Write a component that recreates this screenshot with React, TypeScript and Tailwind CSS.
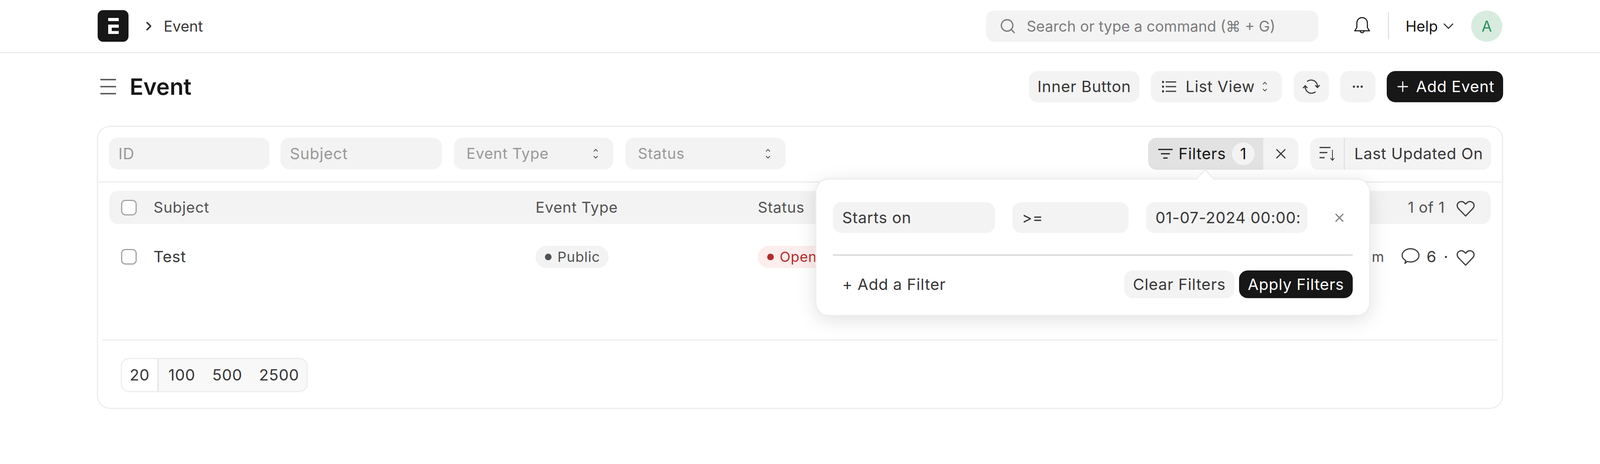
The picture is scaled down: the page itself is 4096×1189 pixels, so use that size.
import { Search, ChevronDown, ChevronRight, Ellipsis, Plus, X } from 'lucide-react';

function Logo() {
  return (
    <svg width="79" height="81" viewBox="0 0 79 81" className="shrink-0 ml-[2px]">
      <rect width="79" height="81" rx="14" fill="#171717" />
      <path d="M27 20h27v8H27z M27 37h27v8H36v8.500h18V61H27z" fill="#fff" />
    </svg>
  );
}

function Bell() {
  return (
    <svg width="54" height="54" viewBox="0 0 16 16" fill="none" stroke="#171717" strokeWidth="0.8" className="shrink-0 ml-[85px]">
      <path d="M8 1.500c-2.500 0-4 2-4 4.500v3l-1.500 2.500h11L12 9V6c0-2.500-1.500-4.500-4-4.500z" />
      <path d="M6.500 11.500a1.500 1.500 0 0 0 3 0" />
    </svg>
  );
}

function Heart({ className }: { className?: string }) {
  return (
    <svg width="52" height="52" viewBox="0 0 16 16" fill="none" stroke="#383838" strokeWidth="0.9" strokeLinejoin="round" className={`shrink-0 ${className ?? ''}`}>
      <path d="M8 14L2.400 8.200C1 6.800 1 4.600 2.400 3.400 3.800 2.200 6 2.400 7.200 3.800l.8.8.8-.8C10 2.400 12.200 2.200 13.600 3.400c1.400 1.200 1.400 3.400 0 4.800z" />
    </svg>
  );
}

function Comment({ className }: { className?: string }) {
  return (
    <svg width="52" height="52" viewBox="0 0 16 16" fill="none" stroke="#383838" strokeWidth="0.9" strokeLinejoin="round" className={`shrink-0 ${className ?? ''}`}>
      <path d="M4.200 11.600C2.600 10.600 1.400 9.200 1.400 7.500c0-2.900 2.900-5.200 6.600-5.200s6.600 2.300 6.600 5.200-2.900 5.200-6.600 5.200c-.9 0-1.800-.1-2.600-.4l-1.800 1.500z" />
    </svg>
  );
}

function Updown({ className }: { className?: string }) {
  return (
    <svg width="14" height="26" viewBox="0 0 14 26" fill="none" stroke="#525252" strokeWidth="2.200" className={`shrink-0 ${className ?? ''}`}>
      <path d="M2 7l5-5 5 5M2 19l5 5 5-5" />
    </svg>
  );
}

function ListIcon() {
  return (
    <svg width="36" height="30" viewBox="0 0 36 30" fill="none" stroke="#383838" strokeWidth="3" className="shrink-0">
      <path d="M9 3h27M9 15h27M9 27h27" />
      <circle cx="2" cy="3" r="1.500" /><circle cx="2" cy="15" r="1.500" /><circle cx="2" cy="27" r="1.500" />
    </svg>
  );
}

function Refresh() {
  return (
    <svg width="50" height="50" viewBox="0 0 16 16" fill="none" stroke="#383838" strokeWidth="0.9">
      <path d="M4.500 3.800A5.200 5.200 0 0 1 13 8.500M14.800 6.800L13 8.700 11.200 6.900" />
      <path d="M11.500 12.200A5.200 5.200 0 0 1 3 7.500M1.200 9.200L3 7.300 4.800 9.100" />
    </svg>
  );
}

function FilterIcon() {
  return (
    <svg width="37" height="26" viewBox="0 0 37 26" fill="none" stroke="#171717" strokeWidth="3" className="shrink-0">
      <path d="M0 2h37M7 13h23M13 24h11" />
    </svg>
  );
}

function SortIcon() {
  return (
    <svg width="38" height="37" viewBox="0 0 38 37" fill="none" stroke="#383838" strokeWidth="3">
      <path d="M0 3h28M0 16h20M0 29h13" />
      <path d="M33 9v27M28 30l5 6 5-6" strokeWidth="2" />
    </svg>
  );
}

function Toggle() {
  return (
    <svg width="42" height="42" viewBox="0 0 42 42" className="shrink-0 ml-[9px]" stroke="#525252" strokeWidth="3.500">
      <path d="M0 3h40M0 21h40M0 39h40" />
    </svg>
  );
}

function Checkbox() {
  return <div className="w-[40px] h-[40px] rounded-[11px] border-[3px] border-[#a3a3a3] bg-white shrink-0" />;
}

function Field({ label, width }: { label: string; width: string }) {
  return (
    <div className={`${width} h-[81px] rounded-[22px] bg-[#f3f3f3] px-[24px] flex items-center text-[#999999] shrink-0`}>
      {label}
    </div>
  );
}

function SelectField({ label, width }: { label: string; width: string }) {
  return (
    <div className={`${width} h-[81px] rounded-[22px] bg-[#f3f3f3] pl-[32px] pr-[38px] flex items-center justify-between text-[38.500px] text-[#999999] shrink-0`}>
      {label}
      <Updown />
    </div>
  );
}

function Btn({ children, className }: { children: React.ReactNode; className?: string }) {
  return (
    <div className={`h-[80px] rounded-[22px] bg-[#f3f3f3] flex items-center text-[#383838] shrink-0 ${className ?? ''}`}>
      {children}
    </div>
  );
}

export default function App() {
  return (
    <div className="w-[4096px] h-[1189px] bg-white overflow-hidden font-['Inter',sans-serif] text-[40px] tracking-[0.02em] leading-none whitespace-nowrap">
      {/* navbar */}
      <header className="h-[136px] border-b-[3px] border-[#ededed]">
        <div className="w-[3600px] h-full mx-auto flex items-center text-[38px] tracking-normal">
          <Logo />
          <ChevronRight size={36} strokeWidth={2.6} className="text-[#383838] ml-[34px]" />
          <span className="ml-[20px] text-[#383838]">Event</span>
          <div className="ml-auto w-[851px] h-[80px] rounded-[22px] bg-[#f3f3f3] flex items-center pl-[34px] text-[#7c7c7c]">
            <Search size={44} strokeWidth={1.8} className="text-[#7c7c7c]" />
            <span className="ml-[26px]">Search or type a command (⌘ + G)</span>
          </div>
          <Bell />
          <div className="w-[3px] h-[69px] bg-[#e2e2e2] ml-[39px]" />
          <span className="ml-[42px] text-[#171717]">Help</span>
          <ChevronDown size={44} strokeWidth={1.6} className="ml-[5px] text-[#383838]" />
          <div className="ml-[36px] w-[80px] h-[80px] rounded-full bg-[#d7ecdf] text-[#278f5e] flex items-center justify-center mr-[2px]">A</div>
        </div>
      </header>

      <main className="w-[3600px] mx-auto">
        {/* page head */}
        <div className="h-[80px] mt-[46px] flex items-center">
          <Toggle />
          <h1 className="ml-[33px] text-[58px] font-semibold text-[#171717] tracking-normal">Event</h1>
          <div className="ml-auto flex items-center">
            <Btn className="w-[283px] justify-center">Inner Button</Btn>
            <Btn className="w-[336px] ml-[29px] pl-[29px] pr-[37px]">
              <ListIcon />
              <span className="ml-[24px]">List View</span>
              <Updown className="ml-auto" />
            </Btn>
            <Btn className="w-[90px] ml-[30px] justify-center"><Refresh /></Btn>
            <Btn className="w-[90px] ml-[29px] justify-center"><Ellipsis size={34} strokeWidth={2} /></Btn>
            <div className="w-[298px] h-[80px] ml-[29px] rounded-[22px] bg-[#171717] text-white flex items-center pl-[20px]">
              <Plus size={42} strokeWidth={1.6} />
              <span className="ml-[13px]">Add Event</span>
            </div>
          </div>
        </div>

        {/* list card */}
        <section className="relative mt-[60px] h-[726px] rounded-[34px] border-[3px] border-[#ededed]">
          <div className="h-[143px] border-b-[3px] border-[#ededed] pl-[28px] pr-[28px] pb-[3px] flex items-center text-[#383838]">
            <Field label="ID" width="w-[411px]" />
            <div className="ml-[28px]"><Field label="Subject" width="w-[413px]" /></div>
            <div className="ml-[31px]"><SelectField label="Event Type" width="w-[408px]" /></div>
            <div className="ml-[31px]"><SelectField label="Status" width="w-[410px]" /></div>
            <div className="ml-auto flex items-center">
              <div className="h-[82px] w-[385px] rounded-[22px] bg-[#f3f3f3] flex overflow-hidden">
                <div className="w-[295px] bg-[#e2e2e2] flex items-center pl-[26px] text-[#171717]">
                  <FilterIcon />
                  <span className="ml-[15px]">Filters</span>
                  <span className="ml-auto mr-[22px] w-[58px] h-[58px] rounded-full bg-[#f3f3f3] flex items-center justify-center">1</span>
                </div>
                <div className="flex-1 flex items-center justify-center"><X size={42} strokeWidth={1.7} /></div>
              </div>
              <div className="h-[82px] w-[463px] ml-[30px] rounded-[22px] bg-[#f3f3f3] flex items-center">
                <div className="w-[89px] h-full border-r-[3px] border-[#e2e2e2] flex items-center justify-center"><SortIcon /></div>
                <span className="ml-[24px]">Last Updated On</span>
              </div>
            </div>
          </div>

          <div className="px-[29px] mt-[21px] text-[#525252] text-[38.500px]">
            <div className="h-[85px] rounded-[22px] bg-[#f3f3f3] flex items-center pl-[30px]">
              <Checkbox />
              <span className="ml-[43px] w-[978px]">Subject</span>
              <span className="w-[569px]">Event Type</span>
              <span>Status</span>
              <span className="ml-auto">1 of 1</span>
              <Heart className="ml-[27px] mr-[38px] mt-[5px]" />
            </div>
            <div className="h-[114px] mt-[27px] flex items-center pl-[30px] text-[#383838]">
              <Checkbox />
              <span className="ml-[43px] w-[978px] text-[40px]">Test</span>
              <div className="w-[569px]">
                <span className="inline-flex items-center h-[57px] w-[187px] rounded-full bg-[#f3f3f3] pl-[24px] text-[36px] text-[#525252]">
                  <span className="w-[17px] h-[17px] rounded-full bg-[#525252]" />
                  <span className="ml-[15px]">Public</span>
                </span>
              </div>
              <span className="inline-flex items-center h-[57px] w-[200px] rounded-full bg-[#fdeded] pl-[24px] text-[36px] text-[#b52a2a]">
                <span className="w-[17px] h-[17px] rounded-full bg-[#b52a2a]" />
                <span className="ml-[15px]">Open</span>
              </span>
              <span className="ml-auto text-[36px] text-[#525252]">m</span>
              <Comment className="ml-[41px] -mt-[4px]" />
              <span className="ml-[15px] text-[40px]">6</span>
              <span className="ml-[18px] text-[40px]">·</span>
              <Heart className="ml-[18px] mr-[38px] mt-[3px]" />
            </div>
          </div>

          <div className="mx-[12px] mt-[155px] border-t-[3px] border-[#ededed]" />

          <div className="ml-[58px] mt-[44px] w-[479px] h-[88px] rounded-[22px] border-[3px] border-[#ededed] bg-[#f8f8f8] flex items-center overflow-hidden text-[#383838]">
            <span className="w-[94px] h-full bg-white border-r-[3px] border-[#e2e2e2] flex items-center justify-center">20</span>
            <span className="ml-[25px]">100</span>
            <span className="ml-[43px]">500</span>
            <span className="ml-[43px]">2500</span>
          </div>

          {/* filter popover */}
          <div className="absolute left-[1836px] top-[132px] w-[1421px] h-[353px] rounded-[34px] bg-white border-[3px] border-[#ededed] shadow-[0_10px_50px_rgba(0,0,0,0.12)] px-[42px] pt-[58px] text-[#383838]">
            <svg width="56" height="28" viewBox="0 0 56 28" className="absolute left-[967px] top-[-27px]">
              <path d="M4 28 L28 2 L52 28" fill="#fff" stroke="#ededed" strokeWidth="3" />
            </svg>
            <div className="flex items-center">
              <div className="w-[415px] h-[79px] rounded-[22px] bg-[#f3f3f3] flex items-center pl-[24px]">Starts on</div>
              <div className="w-[297px] h-[79px] ml-[45px] rounded-[22px] bg-[#f3f3f3] flex items-center pl-[24px]">&gt;=</div>
              <div className="w-[413px] h-[79px] ml-[45px] rounded-[22px] bg-[#f3f3f3] flex items-center pl-[24px]">01-07-2024 00:00:</div>
              <X size={36} strokeWidth={2} className="ml-[64px] text-[#7c7c7c]" />
            </div>
            <div className="mt-[55px] border-t-[3px] border-[#d4d4d4]" />
            <div className="mt-[38px] flex items-center">
              <span className="ml-[24px]">+ Add a Filter</span>
              <div className="ml-auto w-[282px] h-[71px] rounded-[22px] bg-[#f3f3f3] flex items-center justify-center">Clear Filters</div>
              <div className="ml-[12px] w-[291px] h-[71px] rounded-[22px] bg-[#171717] text-white flex items-center justify-center">Apply Filters</div>
            </div>
          </div>
        </section>
      </main>
    </div>
  );
}
